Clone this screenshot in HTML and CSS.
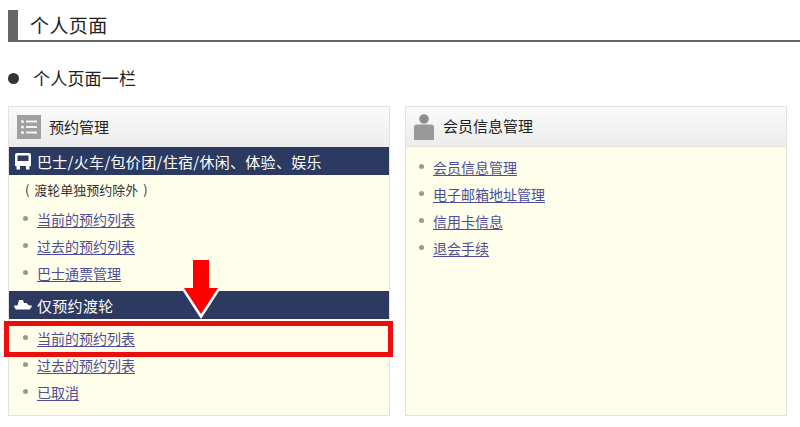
FILE: index.html
```html
<!DOCTYPE html>
<html lang="zh">
<head>
<meta charset="utf-8">
<title>个人页面</title>
<link rel="stylesheet" href="styles.css">
</head>
<body>
<main class="page">
  <h1 class="title">个人页面</h1>
  <h2 class="subtitle">个人页面一栏</h2>
  <div class="columns">
    <section class="panel">
      <header class="panel-head">
        <svg class="head-icon" viewBox="0 0 24 24" width="24" height="24" aria-hidden="true">
          <rect width="24" height="24" fill="#a0a0a0"/>
          <g fill="#f4f4f4">
            <circle cx="5.5" cy="6.5" r="1.5"/><circle cx="5.5" cy="12" r="1.5"/><circle cx="5.5" cy="17.5" r="1.5"/>
            <rect x="9" y="5.5" width="11" height="2"/><rect x="9" y="11" width="11" height="2"/><rect x="9" y="16.5" width="11" height="2"/>
          </g>
        </svg>
        <span>预约管理</span>
      </header>
      <div class="band">
        <svg class="band-icon" viewBox="0 0 18 18" width="18" height="18" aria-hidden="true">
          <path fill="#fff" d="M3 1h12a2 2 0 0 1 2 2v11H1V3a2 2 0 0 1 2-2zM3.500 3.500v5.500h11V3.500zM2.500 14h3.500v3.500H2.500zM12 14h3.500v3.500H12z" fill-rule="evenodd"/>
        </svg>
        <span>巴士/火车/包价团/住宿/休闲、体验、娱乐</span>
      </div>
      <p class="note">( 渡轮单独预约除外 )</p>
      <ul class="links links-a">
        <li><a href="#">当前的预约列表</a></li>
        <li><a href="#">过去的预约列表</a></li>
        <li><a href="#">巴士通票管理</a></li>
      </ul>
      <div class="band band-second">
        <svg class="band-icon" viewBox="0 0 18 12" width="18" height="12" aria-hidden="true">
          <path fill="#fff" d="M5 1h4l1 3h2.500q2 2 3 2.500H18q-.5 2.500-2.500 4H2q-1.500-1-2-4h3.500z"/>
        </svg>
        <span>仅预约渡轮</span>
      </div>
      <ul class="links links-b">
        <li><a href="#">当前的预约列表</a></li>
        <li><a href="#">过去的预约列表</a></li>
        <li><a href="#">已取消</a></li>
      </ul>
    </section>
    <section class="panel">
      <header class="panel-head panel-head-member">
        <svg class="head-icon member-icon" viewBox="0 0 20 26" width="20" height="26" aria-hidden="true">
          <circle cx="10" cy="5" r="4.800" fill="#8e8e8e"/>
          <path fill="#999" d="M3 10.500h14q3 0 3 3V26H0V13.500q0-3 3-3z"/>
        </svg>
        <span>会员信息管理</span>
      </header>
      <ul class="links links-c">
        <li><a href="#">会员信息管理</a></li>
        <li><a href="#">电子邮箱地址管理</a></li>
        <li><a href="#">信用卡信息</a></li>
        <li><a href="#">退会手续</a></li>
      </ul>
    </section>
  </div>
  <div class="callout-box"></div>
  <svg class="callout-arrow" viewBox="0 0 42 60" width="42" height="60" aria-hidden="true">
    <polygon fill="#fff" points="1,28 41,28 21,59"/>
    <polygon fill="#f00" points="13,0 29,0 29,28 38,28 21,54 4,28 13,28"/>
  </svg>
</main>
</body>
</html>
```

FILE: styles.css
```css
* { box-sizing: border-box; }
html, body { margin: 0; padding: 0; background: #fff; }
body {
  font-family: "Noto Sans CJK SC", "Liberation Sans", sans-serif;
  color: #222;
  overflow: hidden;
}
.page { position: relative; width: 800px; height: 427px; padding: 10px 13px 0 8px; }
.title {
  margin: 0 -13px 0 0;
  height: 32px;
  border-left: 10px solid #666;
  border-bottom: 2px solid #666;
  padding-left: 12px;
  font-size: 19px;
  font-weight: 400;
  letter-spacing: .4px;
  line-height: 29px;
}
.subtitle {
  display: flex;
  align-items: center;
  gap: 14px;
  margin: 21px 0 0;
  height: 30px;
  font-size: 17px;
  font-weight: 400;
  letter-spacing: .2px;
  line-height: 30px;
}
.subtitle::before {
  content: "";
  width: 11px;
  height: 11px;
  border-radius: 50%;
  background: #333;
}
.columns { display: grid; grid-template-columns: 382px 382px; gap: 15px; margin-top: 13px; }
.panel {
  height: 310px;
  background: #fffeea;
  border: 1px solid #e3e3dc;
}
.panel-head {
  display: flex;
  align-items: center;
  gap: 8px;
  height: 40px;
  padding-left: 8px;
  background: linear-gradient(#fafafa, #ececec);
  font-size: 15px;
  color: #222;
}
.panel-head span { margin-top: -2px; }
.panel-head-member { gap: 9px; padding-left: 8px; border-bottom: 1px solid #e3e3dc; }
.head-icon { flex: none; }
.band {
  display: flex;
  align-items: center;
  gap: 5px;
  height: 28px;
  padding-left: 5px;
  background: #2c3a61;
  color: #fff;
  font-size: 15px;
  letter-spacing: .3px;
}
.band-icon { flex: none; }
.note { margin: 0; padding-left: 16px; height: 31px; font-size: 13px; word-spacing: 2px; line-height: 30px; color: #333; }
.links { list-style: none; margin: 0; padding: 0; font-size: 14px; }
.links li { position: relative; height: 27px; line-height: 27px; padding-left: 28px; }
.links li::before {
  content: "";
  position: absolute;
  left: 14px;
  top: 10px;
  width: 5px;
  height: 5px;
  border-radius: 50%;
  background: #9a9a8c;
}
.links a { color: #4d4d9c; text-decoration: underline; text-underline-offset: 2px; }
.links-a { margin-bottom: 4px; }
.links-b { margin-top: 6px; }
.links-c { margin-top: 7px; }
.links-c li { padding-left: 27px; }
.links-c li::before { left: 13px; }
.callout-box {
  position: absolute;
  left: 4px;
  top: 321px;
  width: 389px;
  height: 36px;
  border: 5px solid #ee0d0d;
}
.callout-arrow { position: absolute; left: 180px; top: 260px; }
```
